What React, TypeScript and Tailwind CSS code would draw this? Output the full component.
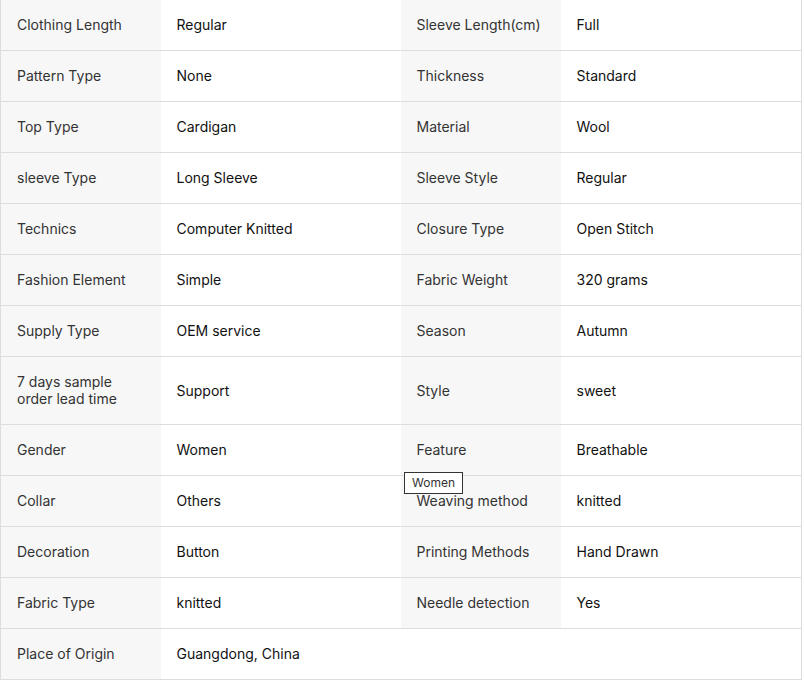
import React from 'react';

// 商品属性表
const rows: [string, string, string?, string?][] = [
  ['Clothing Length', 'Regular', 'Sleeve Length(cm)', 'Full'],
  ['Pattern Type', 'None', 'Thickness', 'Standard'],
  ['Top Type', 'Cardigan', 'Material', 'Wool'],
  ['sleeve Type', 'Long Sleeve', 'Sleeve Style', 'Regular'],
  ['Technics', 'Computer Knitted', 'Closure Type', 'Open Stitch'],
  ['Fashion Element', 'Simple', 'Fabric Weight', '320 grams'],
  ['Supply Type', 'OEM service', 'Season', 'Autumn'],
  ['7 days sample order lead time', 'Support', 'Style', 'sweet'],
  ['Gender', 'Women', 'Feature', 'Breathable'],
  ['Collar', 'Others', 'Weaving method', 'knitted'],
  ['Decoration', 'Button', 'Printing Methods', 'Hand Drawn'],
  ['Fabric Type', 'knitted', 'Needle detection', 'Yes'],
  ['Place of Origin', 'Guangdong, China'],
];

export default function App() {
  return (
    <div
      className="relative w-[801px] bg-white"
      style={{ fontFamily: 'Inter, "Noto Sans", sans-serif' }}
    >
      <table className="w-full table-fixed border-collapse border-x border-b border-[#dddddd] text-[14px] leading-[18px]">
        <colgroup>
          <col className="w-[160px]" />
          <col className="w-[240px]" />
          <col className="w-[160px]" />
          <col className="w-[241px]" />
        </colgroup>
        <tbody>
          {rows.map(([k1, v1, k2, v2], i) => (
            <tr
              key={i}
              className={i === rows.length - 1 ? '' : 'border-b border-[#dddddd]'}
            >
              <td
                className={
                  i === 7
                    ? 'bg-[#f7f7f7] px-4 pt-4 pb-[17px] align-middle leading-[17px] text-[#333333]'
                    : 'bg-[#f7f7f7] px-4 py-4 align-middle text-[#333333]'
                }
              >
                {k1}
              </td>
              {k2 === undefined ? (
                <td colSpan={3} className="px-4 py-4 align-middle text-[#111111]">
                  {v1}
                </td>
              ) : (
                <>
                  <td className="px-4 py-4 align-middle text-[#111111]">{v1}</td>
                  <td className="bg-[#f7f7f7] px-4 py-4 align-middle text-[#333333]">
                    {k2}
                  </td>
                  <td className="px-4 py-4 align-middle text-[#111111]">{v2}</td>
                </>
              )}
            </tr>
          ))}
        </tbody>
      </table>

      {/* 浏览器提示框 */}
      <div className="absolute left-[404px] top-[472px] border border-[#333333] bg-white px-[7px] py-[2px] text-[12px] leading-[16px] text-[#333333]">
        Women
      </div>
    </div>
  );
}
